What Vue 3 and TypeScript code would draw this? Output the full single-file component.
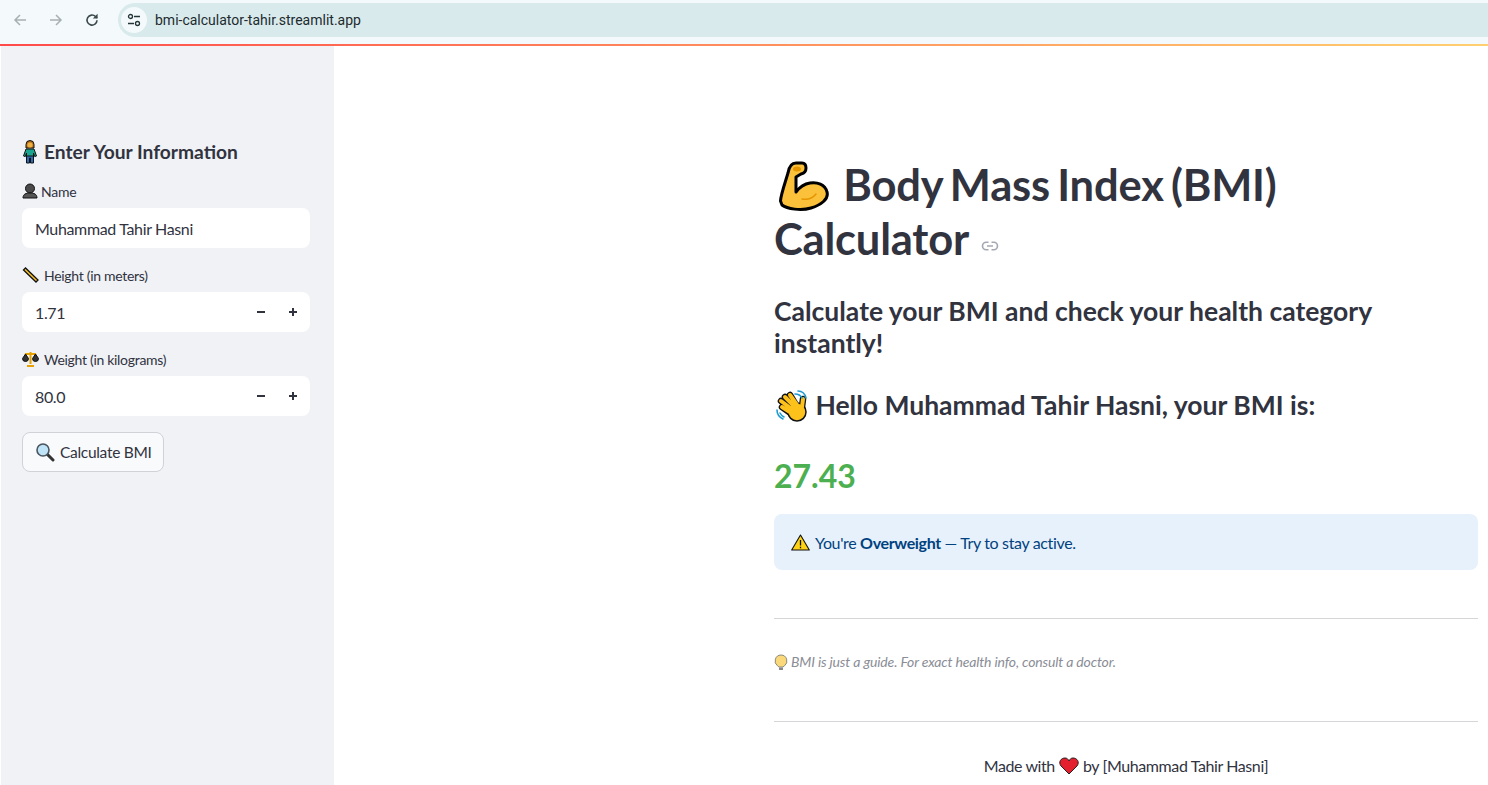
<script setup lang="ts">
import { ref } from 'vue';

const nombre = ref('Muhammad Tahir Hasni');
const altura = ref('1.71');
const peso = ref('80.0');
</script>

<template>
  <div class="page">
    <header class="chrome">
      <div class="nav">
        <svg class="nav-icon" viewBox="0 0 16 16"><path d="M14 8H3M8 3 3 8l5 5" fill="none" stroke="#a9b0b2" stroke-width="1.5" /></svg>
        <svg class="nav-icon" viewBox="0 0 16 16"><path d="M2 8h11M8 3l5 5-5 5" fill="none" stroke="#a9b0b2" stroke-width="1.5" /></svg>
        <svg class="nav-icon" viewBox="0 0 16 16"><path d="M13 8.2a5 5 0 1 1-1.500-3.700L13 6" fill="none" stroke="#3c4a4d" stroke-width="1.600" /><path d="M13.600 1.800v4.800H8.800z" fill="#3c4a4d" /></svg>
      </div>
      <div class="url">
        <span class="tune">
          <svg viewBox="0 0 16 16" width="16" height="16"><circle cx="4.500" cy="4.500" r="2" fill="none" stroke="#243438" stroke-width="1.300" /><path d="M8 4.500h6M2 11.500h6" stroke="#243438" stroke-width="1.300" /><circle cx="11.500" cy="11.500" r="2" fill="none" stroke="#243438" stroke-width="1.300" /></svg>
        </span>
        <span class="url-text">bmi-calculator-tahir.streamlit.app</span>
      </div>
    </header>
    <div class="rainbow"></div>

    <div class="body">
      <aside class="sidebar">
        <h2 class="side-title">
          <svg class="emoji" width="16" height="24" viewBox="0 0 16 24">
            <path d="M4 8V4.500a4 4 0 0 1 8 0V8z" fill="#b5701c" stroke="#111" />
            <circle cx="8" cy="5" r="2.600" fill="#f0b040" />
            <path d="M4 9h8l2.500 7-1.800.6L11.500 13v3.500h-7V13l-1.200 3.600-1.800-.6z" fill="#19a58f" stroke="#111" stroke-width="1" stroke-linejoin="round" />
            <path d="M4.500 16h7v7H8.500v-5h-1v5h-3z" fill="#2c6fb8" stroke="#111" stroke-width="1" stroke-linejoin="round" />
          </svg>
          Enter Your Information
        </h2>

        <label class="field-label">
          <svg class="emoji" width="16" height="16" viewBox="0 0 16 16">
            <circle cx="8" cy="5.500" r="4.500" fill="#4a4a4a" stroke="#111" />
            <path d="M1 15c0-4 3-5 7-5s7 1 7 5z" fill="#555" stroke="#111" />
          </svg>
          Name
        </label>
        <div class="input"><span>{{ nombre }}</span></div>

        <label class="field-label wide">
          <svg class="emoji" width="17" height="16" viewBox="0 0 17 16">
            <path d="M1.500 3 3.500 1 16 13l-2 2z" fill="#f5c02c" stroke="#111" stroke-width="1.300" />
          </svg>
          Height (in meters)
        </label>
        <div class="input">
          <span>{{ altura }}</span>
          <div class="steppers">
            <span class="step"><svg width="10" height="10" viewBox="0 0 10 10"><path d="M1 5h8" stroke="#31333f" stroke-width="2" /></svg></span>
            <span class="step"><svg width="10" height="10" viewBox="0 0 10 10"><path d="M1 5h8M5 1v8" stroke="#31333f" stroke-width="2" /></svg></span>
          </div>
        </div>

        <label class="field-label wide">
          <svg class="emoji" width="17" height="16" viewBox="0 0 17 16">
            <path d="M8.500 1v12M3 3h11M5 15h7" stroke="#e6a200" stroke-width="2" />
            <path d="M.5 7.500 3.500 3l3 4.500a3 3 0 0 1-6 0zM10.500 7.500l3-4.500 3 4.500a3 3 0 0 1-6 0z" fill="#333" stroke="#111" />
          </svg>
          Weight (in kilograms)
        </label>
        <div class="input">
          <span>{{ peso }}</span>
          <div class="steppers">
            <span class="step"><svg width="10" height="10" viewBox="0 0 10 10"><path d="M1 5h8" stroke="#31333f" stroke-width="2" /></svg></span>
            <span class="step"><svg width="10" height="10" viewBox="0 0 10 10"><path d="M1 5h8M5 1v8" stroke="#31333f" stroke-width="2" /></svg></span>
          </div>
        </div>

        <button class="calc">
          <svg width="20" height="20" viewBox="0 0 20 20">
            <path d="M12 12l6 6" stroke="#333" stroke-width="3" stroke-linecap="round" />
            <circle cx="8" cy="8" r="6" fill="#bfe3f7" stroke="#4a5560" stroke-width="1.600" />
          </svg>
          <span>Calculate BMI</span>
        </button>
      </aside>

      <main class="main">
        <h1 class="title">
          <svg class="muscle" width="50" height="50" viewBox="0 0 50 50">
            <path d="M1.500 40C1.500 35 5 25 9 12 10 6 12 2 17 2h6c3 0 4 2 4 5s-1 5-5 6l-5 3v15c3-4 7-8 14-9 7-1 15 1 17 9 2 7-6 13-16 16-10 3-24 1-29-3z" fill="#fcc13b" stroke="#000" stroke-width="3" stroke-linejoin="round" />
            <path d="M23 38c5 1 10 0 14-5" fill="none" stroke="#e59600" stroke-width="1.500" stroke-linecap="round" />
            <ellipse cx="18" cy="8" rx="4" ry="2.500" fill="#e59600" />
          </svg>
          Body Mass Index (BMI)<br />Calculator
          <svg class="link" width="18" height="18" viewBox="0 0 24 24" fill="none" stroke="#a3a8b4" stroke-width="2.200"><path d="M10 7H7a5 5 0 0 0 0 10h3M14 7h3a5 5 0 0 1 0 10h-3M8 12h8" /></svg>
        </h1>

        <h3 class="sub">Calculate your BMI and check your health category instantly!</h3>

        <h3 class="hello">
          <svg class="wave" width="34" height="34" viewBox="0 0 34 34">
            <g fill="none" stroke="#111" stroke-width="6.500" stroke-linecap="round">
              <path d="M17 25 7 18M17 21 6 12M19 18 10 8M21 16 15 6M27 18l1-8" />
            </g>
            <circle cx="22" cy="23" r="9" fill="#fcc21b" stroke="#111" stroke-width="1.500" />
            <g fill="none" stroke="#fcc21b" stroke-width="4" stroke-linecap="round">
              <path d="M18 25 7 18M18 21 6 12M20 18 10 8M22 16 15 6M27 18l1-8" />
            </g>
            <path d="M23 2c4 0 7 3 8 7M20 5c3 0 6 2 7 4M2 21c0 4 2 7 6 9M5 24c1 2 2 3 4 4" fill="none" stroke="#1d9bd1" stroke-width="1.600" stroke-linecap="round" />
          </svg>
          Hello Muhammad Tahir Hasni, your BMI is:
        </h3>

        <p class="valor">27.43</p>

        <div class="alert">
          <svg width="19" height="17" viewBox="0 0 19 17"><path d="M9.500 1 18.300 16H.7z" fill="#fcd116" stroke="#111" stroke-width="1.100" stroke-linejoin="round" /><path d="M9.500 6v5.500M9.500 12.800v1.400" stroke="#111" stroke-width="1.300" /></svg>
          <span>You're <strong>Overweight</strong> — Try to stay active.</span>
        </div>

        <hr class="sep first" />

        <p class="note">
          <svg width="14" height="17" viewBox="0 0 14 17"><path d="M7 1a6 6 0 0 0-3.500 10.800L5 13h4l1.500-1.200A6 6 0 0 0 7 1z" fill="#fbd97a" stroke="#8a8a7a" /><path d="M5 13.500h4v2.500H5z" fill="#888" /></svg>
          <em>BMI is just a guide. For exact health info, consult a doctor.</em>
        </p>

        <hr class="sep second" />

        <p class="made">
          Made with
          <svg width="20" height="18" viewBox="0 0 20 18"><path d="M10 17 2 9C-1 5 2 1 6 1c2 0 3 1 4 3 1-2 2-3 4-3 4 0 7 4 4 8z" fill="#e5202e" stroke="#222" /></svg>
          by [Muhammad Tahir Hasni]
        </p>
      </main>
    </div>
  </div>
</template>

<style>
html,
body {
  margin: 0;
  background: #fff;
}
</style>

<style scoped>
.page {
  height: 785px;
  overflow: hidden;
  display: flex;
  flex-direction: column;
  font-family: 'Lato', 'Noto Sans', sans-serif;
  color: #31333f;
}

.chrome {
  height: 44px;
  flex: none;
  display: flex;
  align-items: flex-start;
  background: #f4fafb;
}
.nav {
  display: flex;
  gap: 20px;
  padding: 12px 0 0 12px;
  width: 118px;
  box-sizing: border-box;
  flex: none;
}
.nav-icon {
  width: 16px;
  height: 16px;
}
.url {
  flex: 1;
  height: 34px;
  margin-top: 3px;
  background: #d9eaec;
  border-radius: 17px 0 0 17px;
  display: flex;
  align-items: center;
  font-family: 'Roboto', sans-serif;
  font-size: 14px;
  color: #1c2b2f;
}
.tune {
  width: 26px;
  height: 26px;
  margin: 0 8px 0 3px;
  border-radius: 50%;
  background: #f4fafb;
  display: flex;
  align-items: center;
  justify-content: center;
}
.rainbow {
  height: 2px;
  flex: none;
  background: linear-gradient(90deg, #ff4b4b, #ffd070);
}

.body {
  flex: 1;
  display: flex;
  padding-left: 1px;
}
.sidebar {
  width: 333px;
  flex: none;
  box-sizing: border-box;
  padding: 93px 24px 0 21px;
  background: #f0f2f6;
}
.side-title {
  margin: 0 0 16px;
  display: flex;
  align-items: center;
  gap: 6px;
  font-size: 19.200px;
  line-height: 26px;
  font-weight: 700;
}
.field-label {
  display: flex;
  align-items: center;
  gap: 3px;
  height: 20px;
  margin-bottom: 7px;
  font-size: 14px;
  letter-spacing: -0.200px;
}
.field-label.wide {
  gap: 5px;
  letter-spacing: -0.300px;
}
.input {
  height: 40px;
  box-sizing: border-box;
  padding: 0 1px 0 13px;
  margin-bottom: 17px;
  background: #fff;
  border-radius: 8px;
  display: flex;
  align-items: center;
  justify-content: space-between;
  font-size: 16px;
  letter-spacing: -0.350px;
}
.steppers {
  display: flex;
}
.step {
  width: 32px;
  display: flex;
  justify-content: center;
}
.calc {
  display: flex;
  align-items: center;
  gap: 5px;
  height: 40px;
  padding: 0 11px 0 12px;
  margin-top: -1px;
  background: #f9fafc;
  border: 1px solid #d0d2d8;
  border-radius: 8px;
  font: inherit;
  font-size: 15.500px;
  letter-spacing: -0.300px;
  color: #31333f;
}

.main {
  flex: 1;
  padding: 111px 10px 0 440px;
  min-width: 0;
}
.title {
  margin: 0 0 30px;
  font-size: 43.500px;
  line-height: 54px;
  font-weight: 700;
  letter-spacing: -0.200px;
  word-spacing: -3px;
}
.muscle {
  vertical-align: -10px;
  margin-left: 5px;
  margin-right: 7px;
}
.link {
  vertical-align: 0;
  margin-left: 6px;
}
.sub,
.hello {
  margin: 0;
  font-size: 26.500px;
  line-height: 32px;
  font-weight: 700;
}
.hello {
  margin-top: 30px;
}
.wave {
  vertical-align: -8px;
  margin-left: 1px;
}
.valor {
  margin: 31px 0 0;
  font-size: 32px;
  line-height: 44px;
  font-weight: 700;
  color: #4caf50;
}
.alert {
  display: flex;
  align-items: center;
  gap: 5px;
  height: 56px;
  margin-top: 16px;
  padding: 0 17px;
  background: #e7f1fb;
  border-radius: 8px;
  font-size: 16px;
  letter-spacing: -0.350px;
  color: #004280;
}
.sep {
  margin: 0;
  border: none;
  border-top: 1px solid #d6d6d8;
}
.first {
  margin-top: 48px;
}
.note {
  margin: 33px 0 0;
  display: flex;
  align-items: center;
  gap: 3px;
  font-size: 14px;
  line-height: 20px;
  letter-spacing: -0.150px;
  color: #8a8d96;
}
.second {
  margin-top: 49px;
}
.made {
  margin: 33px 0 0;
  display: flex;
  justify-content: center;
  align-items: center;
  gap: 4px;
  font-size: 16px;
  line-height: 22px;
  letter-spacing: -0.400px;
}
</style>
